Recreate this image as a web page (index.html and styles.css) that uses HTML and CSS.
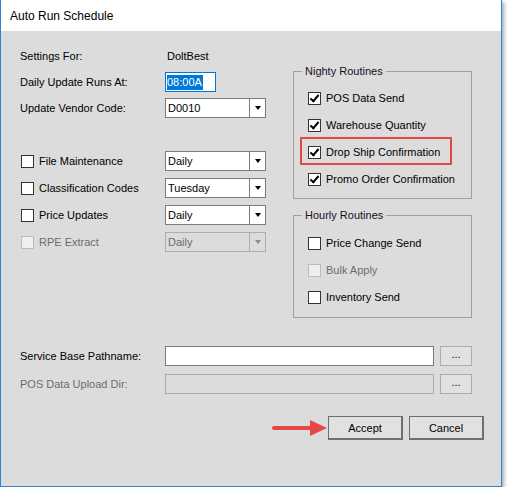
FILE: index.html
```html
<!DOCTYPE html>
<html lang="en">
<head>
  <meta charset="UTF-8">
  <title>Auto Run Schedule</title>
  <link rel="stylesheet" href="styles.css">
</head>
<body>

<div class="window">
  <div class="titlebar">Auto Run Schedule</div>

  <div class="dialog">
    <div class="top">
      <div class="left">
        <div class="settings">
          <div class="row">
            <span class="label">Settings For:</span>
            <span class="value">DoltBest</span>
          </div>
          <div class="row">
            <span class="label">Daily Update Runs At:</span>
            <span class="textbox time focused"><span class="selected">08:00A</span></span>
          </div>
          <div class="row">
            <span class="label">Update Vendor Code:</span>
            <span class="combo"><span class="combo-text">D0010</span><span class="combo-btn"></span></span>
          </div>
        </div>

        <div class="tasks">
          <div class="row">
            <label class="check"><span class="box"></span>File Maintenance</label>
            <span class="combo"><span class="combo-text">Daily</span><span class="combo-btn"></span></span>
          </div>
          <div class="row">
            <label class="check"><span class="box"></span>Classification Codes</label>
            <span class="combo"><span class="combo-text">Tuesday</span><span class="combo-btn"></span></span>
          </div>
          <div class="row">
            <label class="check"><span class="box"></span>Price Updates</label>
            <span class="combo"><span class="combo-text">Daily</span><span class="combo-btn"></span></span>
          </div>
          <div class="row">
            <label class="check disabled"><span class="box"></span>RPE Extract</label>
            <span class="combo disabled"><span class="combo-text">Daily</span><span class="combo-btn"></span></span>
          </div>
        </div>
      </div>

      <div class="right">
        <fieldset class="group">
          <legend>Nighty Routines</legend>
          <label class="check"><span class="box checked"></span>POS Data Send</label>
          <label class="check"><span class="box checked"></span>Warehouse Quantity</label>
          <label class="check marked"><span class="box checked"></span>Drop Ship Confirmation</label>
          <label class="check"><span class="box checked"></span>Promo Order Confirmation</label>
        </fieldset>

        <fieldset class="group hourly">
          <legend>Hourly Routines</legend>
          <label class="check"><span class="box"></span>Price Change Send</label>
          <label class="check disabled"><span class="box"></span>Bulk Apply</label>
          <label class="check"><span class="box"></span>Inventory Send</label>
        </fieldset>
      </div>
    </div>

    <div class="paths">
      <div class="row">
        <span class="label">Service Base Pathname:</span>
        <span class="textbox path"></span>
        <button class="browse">...</button>
      </div>
      <div class="row">
        <span class="label disabled">POS Data Upload Dir:</span>
        <span class="textbox path disabled"></span>
        <button class="browse">...</button>
      </div>
    </div>

    <div class="actions">
      <svg class="arrow" width="56" height="18" viewBox="0 0 56 18">
        <path d="M2 9 L42 9" stroke="#e8474a" stroke-width="4" stroke-linecap="round"/>
        <path d="M38 1 L55 9 L38 17 Z" fill="#e8474a"/>
      </svg>
      <button class="btn">Accept</button>
      <button class="btn">Cancel</button>
    </div>
  </div>
</div>

</body>
</html>
```

FILE: styles.css
```css
body {
  margin: 0;
  background: #fff;
  font-family: 'Segoe UI', 'Liberation Sans', Arial, sans-serif;
  font-size: 11px;
  color: #000;
}
.window {
  width: 500px;
  height: 486px;
  border: 1px solid #2a86d4;
  border-top: none;
  background: #dcdcdc;
  box-shadow: 2px 2px 4px rgba(0,0,0,0.35);
  display: flex;
  flex-direction: column;
}
.titlebar {
  height: 31px;
  background: #fff;
  padding-left: 9px;
  font-size: 12px;
  display: flex;
  align-items: center;
}
.dialog {
  flex: 1;
  padding: 15px 17px 0 19px;
  display: flex;
  flex-direction: column;
}
.top {
  display: flex;
}
.left {
  width: 246px;
  flex-shrink: 0;
}
.row {
  display: flex;
  align-items: center;
  height: 20px;
}
.settings, .tasks {
  display: flex;
  flex-direction: column;
}
.settings {
  gap: 6px;
}
.tasks {
  margin-top: 33px;
  gap: 7px;
}
.label {
  width: 145px;
  flex-shrink: 0;
}
.value {
  padding-left: 2px;
}
.disabled {
  color: #6d6d6d;
}

/* text boxes */
.textbox {
  box-sizing: border-box;
  height: 20px;
  background: #fff;
  border: 1px solid #7a7a7a;
  display: flex;
  align-items: center;
  padding-left: 1px;
}
.textbox.time {
  width: 51px;
}
.textbox.focused {
  border-color: #0078d7;
}
.textbox .selected {
  background: #0078d7;
  color: #fff;
  line-height: 15px;
  padding-right: 1px;
}
.textbox.path {
  width: 269px;
  margin-right: 6px;
}
.textbox.disabled {
  background: #dcdcdc;
  border-color: #a9a9a9;
}

/* combo boxes */
.combo {
  box-sizing: border-box;
  width: 101px;
  height: 20px;
  flex-shrink: 0;
  background: #fff;
  border: 1px solid #7a7a7a;
  display: flex;
}
.combo-text {
  flex: 1;
  padding-left: 2px;
  display: flex;
  align-items: center;
}
.combo-btn {
  width: 15px;
  border-left: 1px solid #7a7a7a;
  display: flex;
  align-items: center;
  justify-content: center;
}
.combo-btn::after {
  content: '';
  border-left: 3.5px solid transparent;
  border-right: 3.5px solid transparent;
  border-top: 4px solid #000;
}
.combo.disabled {
  background: #dcdcdc;
  border-color: #adadad;
}
.combo.disabled .combo-btn {
  border-left-color: #adadad;
}
.combo.disabled .combo-btn::after {
  border-top-color: #8c8c8c;
}

/* check boxes */
.check {
  display: flex;
  align-items: center;
  height: 20px;
  gap: 5px;
  position: relative;
}
.tasks .check {
  box-sizing: border-box;
  width: 145px;
  flex-shrink: 0;
  padding-left: 1px;
}
.box {
  box-sizing: border-box;
  width: 13px;
  height: 13px;
  background: #fff;
  border: 1px solid #333;
  position: relative;
}
.box.checked::after {
  content: '';
  position: absolute;
  left: 3px;
  top: 0px;
  width: 3px;
  height: 7px;
  border: solid #000;
  border-width: 0 2px 2px 0;
  transform: rotate(40deg);
}
.check.disabled .box {
  background: #efefef;
  border-color: #bcbcbc;
}
.check.marked::after {
  content: '';
  position: absolute;
  left: -8px;
  top: -5px;
  width: 152px;
  height: 28px;
  border: 2px solid #e8474a;
  box-sizing: border-box;
}

/* group boxes */
.right {
  margin-left: 27px;
  margin-top: 18px;
}
.group {
  box-sizing: border-box;
  width: 179px;
  margin: 0;
  border: 1px solid #a0a0a0;
  padding: 10px 6px 9px 14px;
  display: flex;
  flex-direction: column;
  gap: 7px;
}
.group legend {
  padding: 0 3px;
  margin-left: -6px;
  line-height: 14px;
  color: #1a0d24;
}
.group.hourly {
  margin-top: 9px;
  padding-top: 11px;
  padding-bottom: 10px;
}

/* bottom */
.paths {
  margin-top: 28px;
  display: flex;
  flex-direction: column;
  gap: 8px;
}
.browse {
  box-sizing: border-box;
  width: 32px;
  height: 20px;
  margin: 0;
  padding: 0 0 4px;
  background: #e1e1e1;
  border: 1px solid #adadad;
  font-family: inherit;
  font-size: 11px;
  line-height: 10px;
}
.actions {
  margin-top: 22px;
  display: flex;
  justify-content: flex-end;
  align-items: center;
  gap: 6px;
}
.arrow {
  margin-right: -6px;
}
.btn {
  box-sizing: border-box;
  width: 75px;
  height: 24px;
  margin: 0;
  background: #e1e1e1;
  border: 1px solid #6f6f6f;
  border-width: 1px 2px 2px 1px;
  font-family: inherit;
  font-size: 11px;
  color: #000;
}
```
